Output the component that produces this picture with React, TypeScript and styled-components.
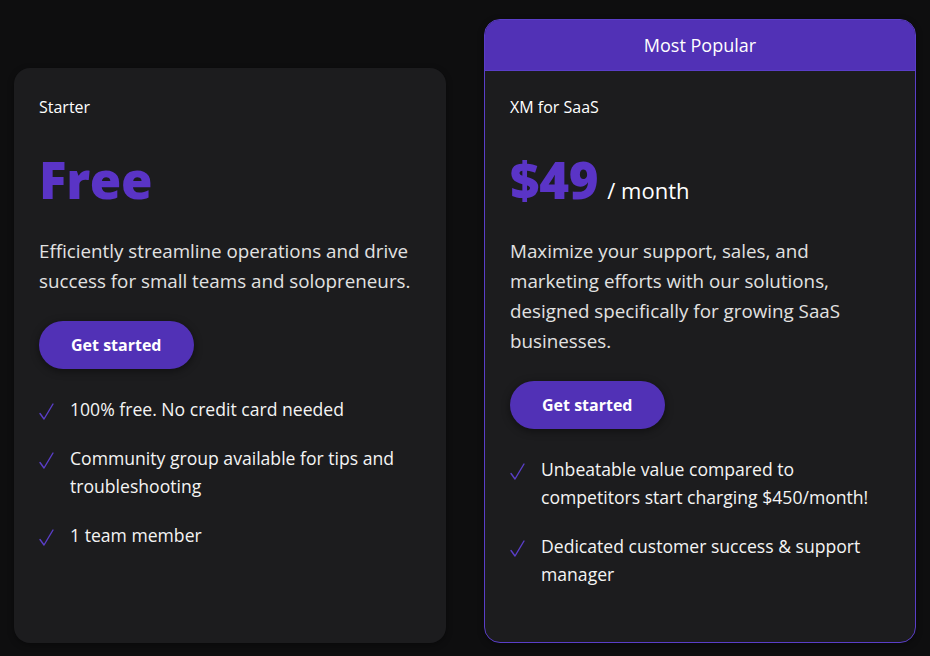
import React from "react";
import styled, { createGlobalStyle } from "styled-components";

const Global = createGlobalStyle`
  html, body { margin: 0; padding: 0; background: #0e0e0f; }
  body { font-family: "Open Sans", "Noto Sans", sans-serif; color: #f2f2f2; }
  * { box-sizing: border-box; }
`;

const Row = styled.div`
  display: flex;
  align-items: flex-end;
  gap: 38px;
  padding: 19px 14px 13px 14px;
`;

const Card = styled.div<{ $featured?: boolean }>`
  width: 432px;
  height: ${(p) => (p.$featured ? 624 : 575)}px;
  display: flex;
  flex-direction: column;
  background: #1c1c1e;
  border-radius: 16px;
  overflow: hidden;
  border: ${(p) => (p.$featured ? "1px solid #5a3ec8" : "none")};
  box-shadow: 0 2px 6px rgba(0, 0, 0, 0.35);
`;

const Badge = styled.div`
  height: 51px;
  flex: none;
  display: flex;
  align-items: center;
  justify-content: center;
  background: #5131b6;
  color: #ffffff;
  font-size: 18px;
  border-bottom: 1px solid #5a3ec8;
`;

const Body = styled.div<{ $featured?: boolean }>`
  display: flex;
  flex-direction: column;
  align-items: flex-start;
  padding: ${(p) => (p.$featured ? 24 : 27)}px 30px 0 25px;
`;

const Tier = styled.div`
  font-size: 16px;
  line-height: 24px;
  color: #ffffff;
`;

const PriceRow = styled.div`
  display: flex;
  align-items: baseline;
  gap: 9px;
  margin-top: 28px;
`;

const Price = styled.span`
  font-size: 51px;
  line-height: 65px;
  font-weight: 800;
  color: #5a34c6;
  letter-spacing: -0.3px;
`;

const Per = styled.span`
  font-size: 22px;
  color: #ffffff;
`;

const Desc = styled.p`
  margin: 24px 0 0;
  font-size: 18.8px;
  line-height: 30px;
  color: #e2e2e2;
`;

const Button = styled.button`
  margin-top: 25px;
  height: 48px;
  padding: 0 32px;
  border: none;
  border-radius: 24px;
  background: #5131b6;
  color: #ffffff;
  font-family: inherit;
  font-size: 16px;
  font-weight: 700;
  box-shadow: 0 2px 8px rgba(0, 0, 0, 0.45);
  cursor: pointer;
`;

const List = styled.ul`
  list-style: none;
  margin: 26px 0 0;
  padding: 0;
  display: flex;
  flex-direction: column;
  gap: 21px;
`;

const Item = styled.li`
  display: flex;
  gap: 16px;
  font-size: 17.6px;
  line-height: 28px;
  color: #f4f4f4;
`;

const CheckBox = styled.span`
  flex: none;
  width: 15px;
  height: 28px;
  display: flex;
  align-items: center;
  padding-top: 4px;
`;

const Check = () => (
  <CheckBox>
    <svg width="15" height="17" viewBox="0 0 15 17">
      <path d="M1 10.5 L5 16 L14 1" fill="none" stroke="#5a3ec8" strokeWidth="1.4" strokeLinecap="round" strokeLinejoin="round" />
    </svg>
  </CheckBox>
);

type Plan = {
  tier: string;
  price: string;
  per?: string;
  desc: string;
  features: string[];
  featured?: boolean;
};

const plans: Plan[] = [
  {
    tier: "Starter",
    price: "Free",
    desc: "Efficiently streamline operations and drive success for small teams and solopreneurs.",
    features: [
      "100% free. No credit card needed",
      "Community group available for tips and troubleshooting",
      "1 team member",
    ],
  },
  {
    tier: "XM for SaaS",
    price: "$49",
    per: "/ month",
    desc: "Maximize your support, sales, and marketing efforts with our solutions, designed specifically for growing SaaS businesses.",
    features: [
      "Unbeatable value compared to competitors start charging $450/month!",
      "Dedicated customer success & support manager",
    ],
    featured: true,
  },
];

export default function App() {
  return (
    <>
      <Global />
      <Row>
        {plans.map((p) => (
          <Card key={p.tier} $featured={p.featured}>
            {p.featured && <Badge>Most Popular</Badge>}
            <Body $featured={p.featured}>
              <Tier>{p.tier}</Tier>
              <PriceRow>
                <Price>{p.price}</Price>
                {p.per && <Per>{p.per}</Per>}
              </PriceRow>
              <Desc>{p.desc}</Desc>
              <Button>Get started</Button>
              <List>
                {p.features.map((f) => (
                  <Item key={f}>
                    <Check />
                    <span>{f}</span>
                  </Item>
                ))}
              </List>
            </Body>
          </Card>
        ))}
      </Row>
    </>
  );
}
